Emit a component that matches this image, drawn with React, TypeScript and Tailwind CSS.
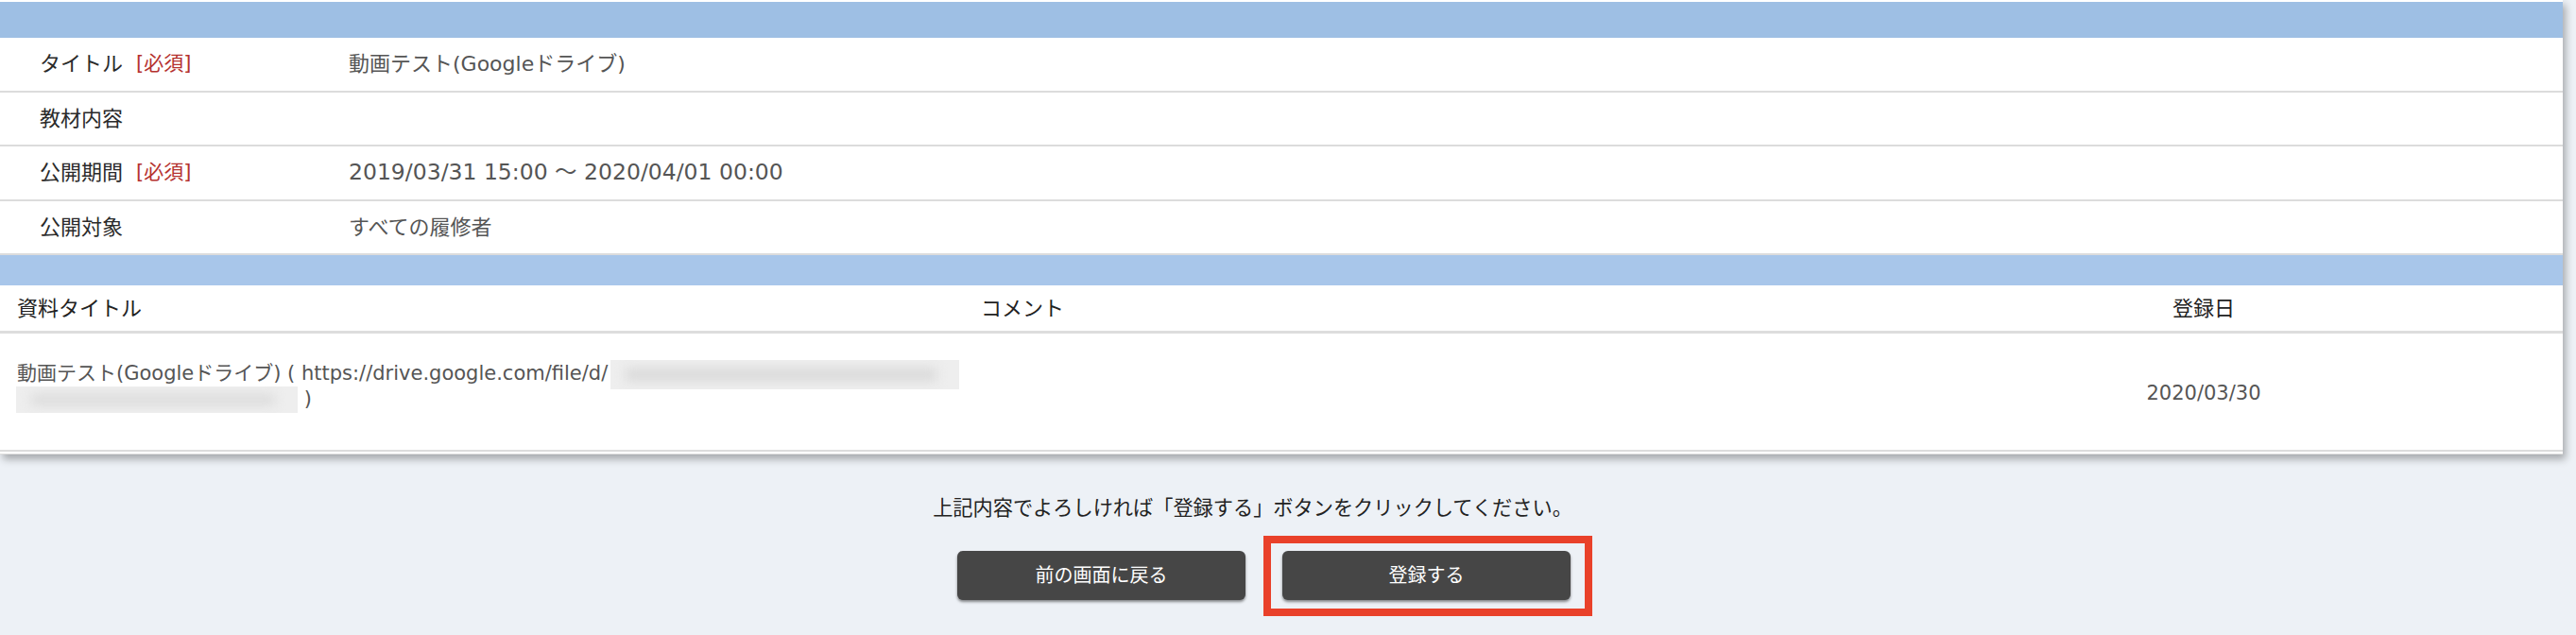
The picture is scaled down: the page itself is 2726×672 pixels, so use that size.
const rows = [
  { label: 'タイトル', required: true, value: '動画テスト(Googleドライブ)' },
  { label: '教材内容', required: false, value: '' },
  { label: '公開期間', required: true, value: '2019/03/31 15:00 ～ 2020/04/01 00:00', date: true },
  { label: '公開対象', required: false, value: 'すべての履修者' },
];

const Blurred = ({ w, h }: { w: number; h: number }) => (
  <span
    className="relative inline-block overflow-hidden bg-[#eeeeee]"
    style={{ width: w, height: h }}
  >
    <span className="absolute left-[16px] right-[24px] top-[9px] bottom-[9px] bg-[#d9d9d9] blur-[6px]" />
  </span>
);

const App = () => {
  return (
    <div className="w-[2726px] h-[672px] overflow-hidden bg-[#edf1f6] font-['DejaVu_Sans','Noto_Sans_CJK_JP',sans-serif]">
      <div className="w-[2712px] bg-white pt-[2px] shadow-[3px_5px_8px_rgba(0,0,0,0.3)]">
        <div className="h-[38px] bg-[#9ebfe4]" />

        {rows.map((row) => (
          <div
            key={row.label}
            className="flex h-[57.5px] items-center border-b-2 border-[#dcdcdc] text-[22px]"
          >
            <div className="flex w-[369px] items-center gap-[14px] pl-[42px] text-[#2a2a2a]">
              <span>{row.label}</span>
              {row.required && <span className="text-[21px] text-[#b5322f]">[必須]</span>}
            </div>
            <div className={row.date ? 'text-[23.5px] text-[#555]' : 'text-[#555]'}>{row.value}</div>
          </div>
        ))}

        <div className="h-[32px] bg-[#a8c6ea]" />

        <div className="grid h-[51px] grid-cols-[1020px_932px_1fr] items-center border-b-[3px] border-[#dddddd] text-[22px] text-[#222]">
          <div className="pl-[18px]">資料タイトル</div>
          <div className="pl-[18px]">コメント</div>
          <div className="text-center">登録日</div>
        </div>

        <div className="grid h-[125px] grid-cols-[1020px_932px_1fr] border-b-2 border-[#dcdcdc] text-[21px] text-[#555]">
          <div className="pl-[18px] pt-[30px]">
            <div className="flex h-[26px] items-center">
              <span className="whitespace-pre">動画テスト(Googleドライブ) ( https://drive.google.com/file/d/</span>
              <span className="ml-[3px] flex">
                <Blurred w={369} h={31} />
              </span>
            </div>
            <div className="flex h-[27px] items-center">
              <span className="-ml-[1px] flex">
                <Blurred w={298} h={28} />
              </span>
              <span className="whitespace-pre"> )</span>
            </div>
          </div>
          <div />
          <div className="flex items-center justify-center pt-[4px]">2020/03/30</div>
        </div>
        <div className="h-[2px]" />
        <div className="h-px bg-[#dcdcdc]" />
      </div>

      <div className="flex w-[2675px] flex-col items-center pt-[42px]">
        <p className="pr-[24px] text-[21.2px] leading-[30px] text-[#222]">
          上記内容でよろしければ「登録する」ボタンをクリックしてください。
        </p>
        <div className="mt-[30px] flex gap-[39px]">
          <button className="h-[52px] w-[305px] rounded-[6px] bg-[#464646] text-[20px] text-white shadow-[0_2px_3px_rgba(0,0,0,0.45)]">
            前の画面に戻る
          </button>
          <div className="relative">
            <button className="h-[52px] w-[305px] rounded-[6px] bg-[#464646] text-[20px] text-white shadow-[0_2px_3px_rgba(0,0,0,0.45)]">
              登録する
            </button>
            <span className="pointer-events-none absolute -left-[20px] -right-[23px] -top-[16px] -bottom-[17px] border-8 border-[#e9412a]" />
          </div>
        </div>
      </div>
    </div>
  );
};

export default App;
